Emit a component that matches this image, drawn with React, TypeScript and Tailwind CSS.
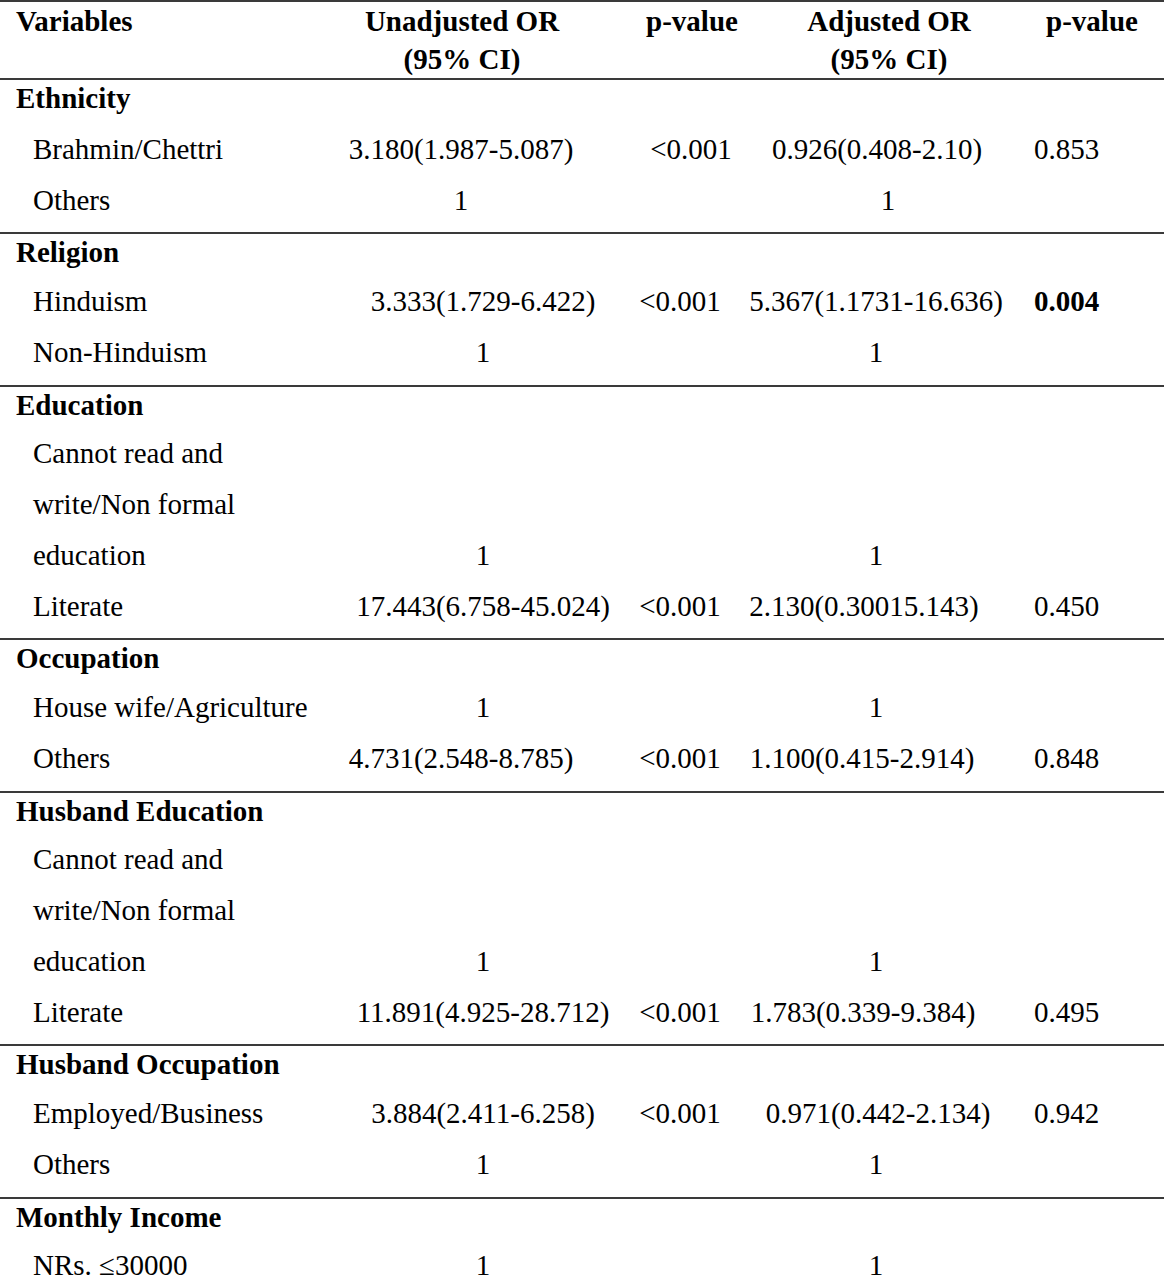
type Cell = { t: string; c?: string; b?: boolean };
type Row = { label: string; cells?: [Cell, Cell, Cell, Cell] };
type Section = { title: string; rows: Row[] };

const E: Cell = { t: "" };

const sections: Section[] = [
    {
        title: "Ethnicity",
        rows: [
            { label: "Brahmin/Chettri", cells: [{ t: "3.180(1.987-5.087)", c: "pr-[44px]" }, { t: "<0.001", c: "pl-[22px]" }, { t: "0.926(0.408-2.10)", c: "pl-[2px]" }, { t: "0.853" }] },
            { label: "Others", cells: [{ t: "1", c: "pr-[44px]" }, E, { t: "1", c: "pl-[24px]" }, E] },
        ],
    },
    {
        title: "Religion",
        rows: [
            { label: "Hinduism", cells: [{ t: "3.333(1.729-6.422)" }, { t: "<0.001" }, { t: "5.367(1.1731-16.636)" }, { t: "0.004", b: true }] },
            { label: "Non-Hinduism", cells: [{ t: "1" }, E, { t: "1" }, E] },
        ],
    },
    {
        title: "Education",
        rows: [
            { label: "Cannot read and" },
            { label: "write/Non formal" },
            { label: "education", cells: [{ t: "1" }, E, { t: "1" }, E] },
            { label: "Literate", cells: [{ t: "17.443(6.758-45.024)" }, { t: "<0.001" }, { t: "2.130(0.30015.143)", c: "pr-[24px]" }, { t: "0.450" }] },
        ],
    },
    {
        title: "Occupation",
        rows: [
            { label: "House wife/Agriculture", cells: [{ t: "1" }, E, { t: "1" }, E] },
            { label: "Others", cells: [{ t: "4.731(2.548-8.785)", c: "pr-[44px]" }, { t: "<0.001" }, { t: "1.100(0.415-2.914)", c: "pr-[28px]" }, { t: "0.848" }] },
        ],
    },
    {
        title: "Husband Education",
        rows: [
            { label: "Cannot read and" },
            { label: "write/Non formal" },
            { label: "education", cells: [{ t: "1" }, E, { t: "1" }, E] },
            { label: "Literate", cells: [{ t: "11.891(4.925-28.712)" }, { t: "<0.001" }, { t: "1.783(0.339-9.384)", c: "pr-[26px]" }, { t: "0.495" }] },
        ],
    },
    {
        title: "Husband Occupation",
        rows: [
            { label: "Employed/Business", cells: [{ t: "3.884(2.411-6.258)" }, { t: "<0.001" }, { t: "0.971(0.442-2.134)", c: "pl-[4px]" }, { t: "0.942" }] },
            { label: "Others", cells: [{ t: "1" }, E, { t: "1" }, E] },
        ],
    },
    {
        title: "Monthly Income",
        rows: [{ label: "NRs. ≤30000", cells: [{ t: "1" }, E, { t: "1" }, E] }],
    },
];

const grid = "grid grid-cols-[330px_306px_88px_304px_136px]";

function Center({ cell }: { cell: Cell }) {
    return (
        <div className={`flex justify-center whitespace-nowrap ${cell.c ?? ""}`}>
            <span className={cell.b ? "font-bold" : ""}>{cell.t}</span>
        </div>
    );
}

function DataRow({ row }: { row: Row }) {
    const cells = row.cells ?? [E, E, E, E];
    return (
        <div className={`${grid} h-[50.75px] items-start`}>
            <div className="pl-[33px] whitespace-nowrap">{row.label}</div>
            <Center cell={cells[0]} />
            <Center cell={cells[1]} />
            <Center cell={cells[2]} />
            <div className={`pl-[6px] whitespace-nowrap ${cells[3].b ? "font-bold" : ""}`}>{cells[3].t}</div>
        </div>
    );
}

export default function App() {
    return (
        <div className="w-[1164px] min-h-[1280px] bg-white text-black font-['Liberation_Serif',serif] text-[29px] leading-[36px]">
            {/* header */}
            <div className={`${grid} h-[80px] border-t-2 border-b-2 border-[#3a3a3a] font-bold leading-[38px]`}>
                <div className="pl-[16px]">Variables</div>
                <div className="flex flex-col items-center pr-[42px] whitespace-nowrap">
                    <span>Unadjusted OR</span>
                    <span>(95% CI)</span>
                </div>
                <div className="flex justify-center pl-[24px] whitespace-nowrap">p-value</div>
                <div className="flex flex-col items-center pl-[26px] whitespace-nowrap">
                    <span>Adjusted OR</span>
                    <span>(95% CI)</span>
                </div>
                <div className="flex justify-center pr-[8px] whitespace-nowrap">p-value</div>
            </div>

            {sections.map((s, i) => (
                <div key={s.title} className={i > 0 ? "border-t-2 border-[#3a3a3a]" : ""}>
                    <div className={`h-[50.75px] pl-[16px] font-bold ${i > 0 ? "-mt-[2px] pt-[2px]" : ""}`}>{s.title}</div>
                    {s.rows.map((r, j) => (
                        <DataRow key={j} row={r} />
                    ))}
                </div>
            ))}
        </div>
    );
}
